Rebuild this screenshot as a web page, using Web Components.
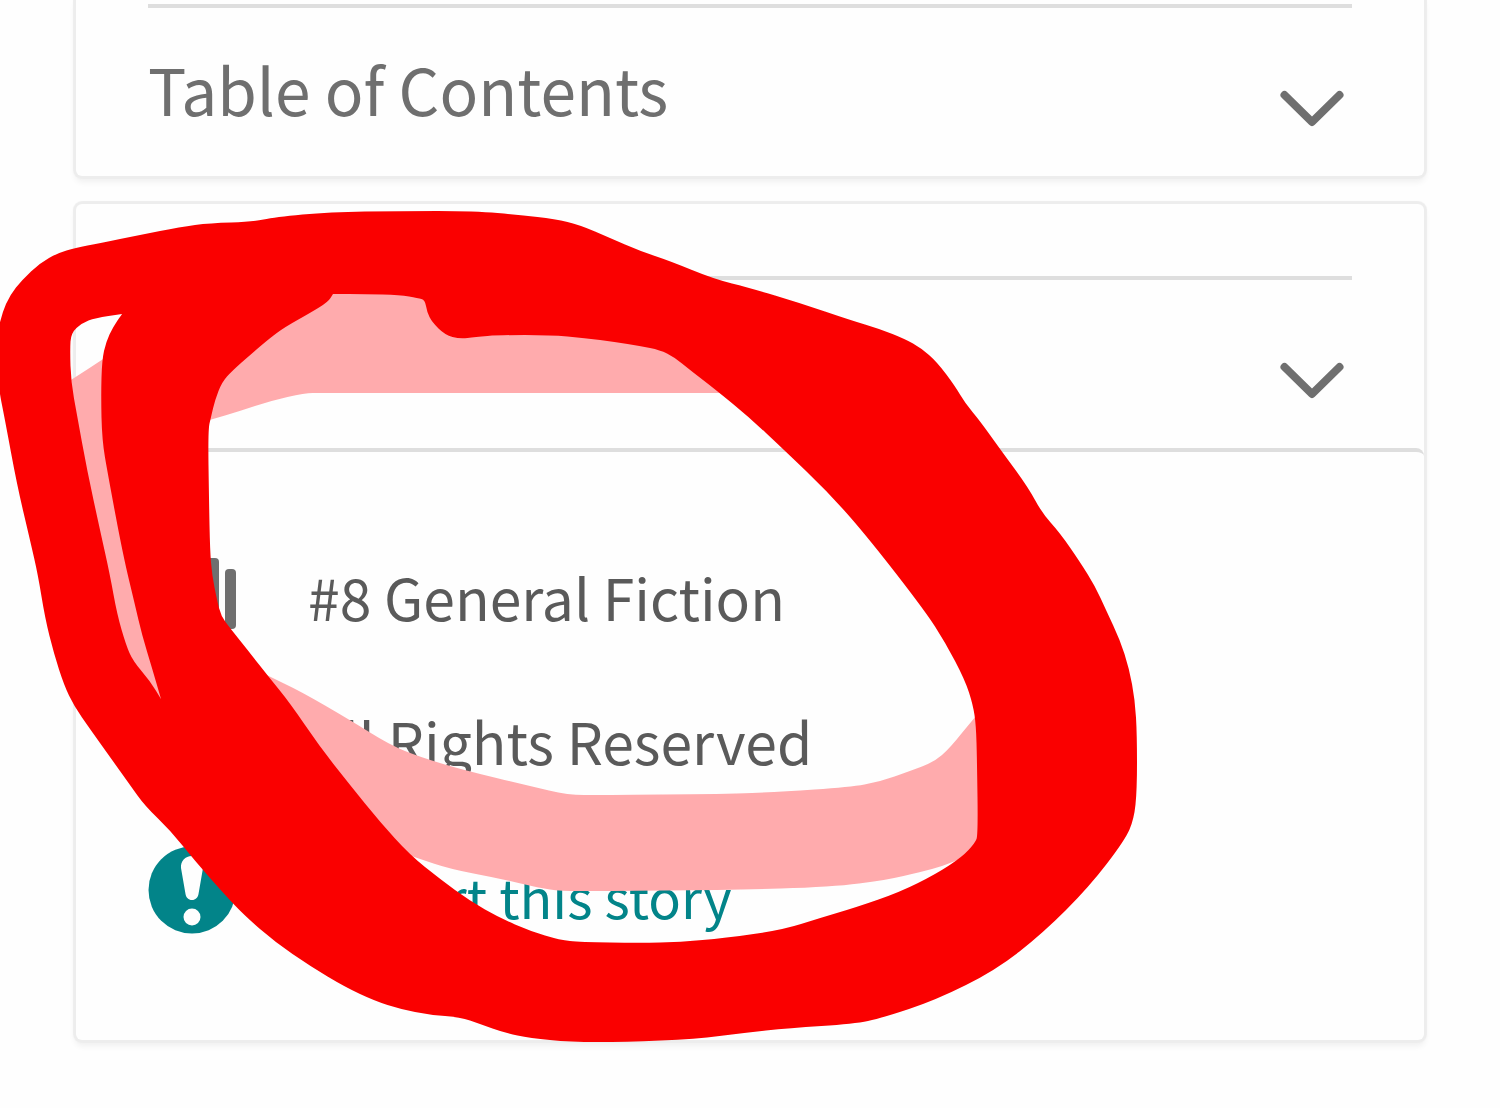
<!DOCTYPE html>
<html lang="en">
<head>
<meta charset="utf-8">
<meta name="viewport" content="width=device-width, initial-scale=1">
<title>Story details</title>
<style>
  body { margin: 0; background: #fefefe; }
</style>
</head>
<body>
<story-page>
  <story-card class="first">
    <card-header>Table of Contents</card-header>
  </story-card>
  <story-card class="second">
    <card-header label="Story details"></card-header>
    <detail-panel>
      <detail-row icon="books">#8 General Fiction</detail-row>
      <detail-row icon="rights">All Rights Reserved</detail-row>
      <detail-row icon="report" href="#report">Report this story</detail-row>
    </detail-panel>
  </story-card>
  <marker-ink slot="overlay"></marker-ink>
</story-page>

<script>
class BaseElement extends HTMLElement {
  render(html) {
    this.attachShadow({ mode: 'open' }).innerHTML = html;
  }
}

customElements.define('story-page', class extends BaseElement {
  connectedCallback() {
    this.render(`
      <style>
        :host { display: block; position: relative; overflow: hidden;
          font-family: "Noto Sans CJK SC", "Noto Sans", sans-serif; color: #6f6f6f; }
        main { display: flex; flex-direction: column; gap: 28px; padding: 0 76px 68px; }
      </style>
      <main><slot></slot></main>
      <slot name="overlay"></slot>`);
  }
});

customElements.define('story-card', class extends BaseElement {
  connectedCallback() {
    this.render(`
      <style>
        :host { display: block; background: #fefefe; border-radius: 6px; padding-top: 72px;
          box-shadow: 0 0 1px 3px #ededed, 0 5px 6px 1px rgba(0, 0, 0, .06); }
        :host(.first) { padding-top: 4px; border-radius: 0 0 6px 6px; }
        hr { margin: 0 72px; border: 0; height: 4px; background: #dedede; }
      </style>
      <hr><slot></slot>`);
  }
});

customElements.define('card-header', class extends BaseElement {
  connectedCallback() {
    const label = this.getAttribute('label');
    this.render(`
      <style>
        :host { display: block; }
        button { display: flex; align-items: flex-end; justify-content: space-between; box-sizing: border-box;
          width: 100%; min-height: 168px; padding: 40px 72px 48px; border: 0; background: none;
          color: inherit; font: inherit; font-size: 64px; line-height: 80px; text-align: left; cursor: pointer; }
        svg { display: block; flex: none; width: 80px; height: 40px; margin-left: auto; }
      </style>
      <button type="button"${label ? ` aria-label="${label}"` : ''}>
        <slot></slot>
        <svg viewBox="0 0 80 40" aria-hidden="true"><path d="M12.500 7 L40 34 L67.500 7" fill="none" stroke="#6f6f6f" stroke-width="8" stroke-linecap="round" stroke-linejoin="round"/></svg>
      </button>`);
  }
});

customElements.define('detail-panel', class extends BaseElement {
  connectedCallback() {
    this.render(`
      <style>
        :host { display: flex; flex-direction: column; border-top: 4px solid #dedede;
          border-radius: 8px; padding: 72px 72px 60px; }
      </style>
      <slot></slot>`);
  }
});

const ICONS = {
  books: `<svg viewBox="0 0 88 88" aria-hidden="true" fill="#6f6f6f">
    <rect x="20" y="6" width="14" height="72" rx="3"/><rect x="38" y="6" width="14" height="72" rx="3"/>
    <rect x="57" y="6" width="14" height="72" rx="4"/><rect x="77" y="17" width="11" height="60" rx="4"/></svg>`,
  rights: `<svg viewBox="0 0 88 88" aria-hidden="true" fill="none" stroke="#6f6f6f" stroke-width="7">
    <circle cx="46" cy="44" r="28"/><path d="M56 36a13 13 0 1 0 0 16"/></svg>`,
  report: `<svg class="tall" viewBox="0 0 88 100" aria-hidden="true">
    <circle cx="44" cy="44" r="43.500" fill="#028489"/>
    <path d="M44 10c-7 0-11.500 5-11 12l4.500 26c.6 3.500 3 6 6.500 6s5.900-2.500 6.500-6l4.500-26c.5-7-4-12-11-12z" fill="#fefefe"/>
    <circle cx="44" cy="71" r="8.500" fill="#fefefe"/></svg>`
};

customElements.define('detail-row', class extends BaseElement {
  connectedCallback() {
    const href = this.getAttribute('href');
    const inner = `${ICONS[this.getAttribute('icon')]}<span><slot></slot></span>`;
    this.render(`
      <style>
        :host { display: block; font-size: 57px; line-height: 80px; color: #5a5a5a; }
        :host([href]) { font-size: 54px; }
        .row { display: flex; align-items: center; gap: 72px; min-height: 144px;
          color: inherit; text-decoration: none; }
        a.row { color: #028489; min-height: 168px; gap: 80px; }
        svg { display: block; flex: none; width: 88px; height: 88px; }
        svg.tall { height: 100px; }
      </style>
      ${href ? `<a class="row" href="${href}">${inner}</a>` : `<div class="row">${inner}</div>`}`);
  }
});

/* Freehand marker shapes. A point given twice in a row stays a sharp corner. */
const OUTER = [[-4,340],[2,313],[10,295],[22,280],[40,263],[58,253],[75,248],[100,243],[140,235],[180,227],[210,223],[252,222],[275,217],[330,212],[400,211],[475,211],[520,215],[555,219],[580,225],[610,238],[640,251],[670,261],[714,279],[750,288],[800,303],[850,320],[880,329],[905,339],[921,348],[937,362],[955,386],[965,403],[980,421],[1000,449],[1028,487],[1042,513],[1060,533],[1080,562],[1095,586],[1106,610],[1120,640],[1129,668],[1135,700],[1137,735],[1137,790],[1134,819],[1125,840],[1089,887],[1043,933],[996,970],[936,1000],[882,1018],[854,1024],[789,1028],[743,1033],[696,1039],[625,1042],[570,1042],[530,1038],[505,1033],[480,1024],[460,1017],[430,1015],[400,1009],[375,1001],[345,987],[310,966],[275,942],[245,916],[225,895],[195,861],[170,830],[145,806],[130,785],[110,757],[90,729],[74,706],[64,685],[54,654],[45,618],[38,575],[30,540],[17,485],[5,420],[-2,385]];
const LOOP = [[333,294],[333,294],[365,294],[400,295],[418,298],[425,300],[427,312],[432,322],[445,335],[460,339],[475,337],[500,335],[550,335],[585,338],[615,342],[640,346],[660,350],[674,357],[690,370],[716,390],[750,418],[782,448],[830,494],[870,540],[925,611],[945,642],[965,680],[973,705],[976,725],[977,760],[978,835],[975,843],[962,857],[936,874],[900,892],[857,907],[820,918],[782,930],[725,938],[680,942],[640,943],[580,942],[560,940],[530,931],[500,918],[470,901],[440,879],[410,855],[380,822],[350,785],[320,747],[290,703],[268,676],[250,653],[230,628],[221,616],[217,600],[212,575],[210,550],[209,500],[208,430],[211,417],[215,400],[222,382],[232,371],[250,355],[270,338],[285,327],[310,313],[328,302]];
const SLIVER = [[122,314],[122,314],[113,327],[106,342],[102,360],[101,395],[102,440],[108,475],[123,555],[135,605],[142,635],[152,668],[161,699],[161,699],[150,681],[133,661],[126,645],[117,614],[110,575],[100,530],[87,470],[77,415],[71,382],[70,350],[71,333],[82,323],[95,318]];
const BAND_LEFT = [[60,387],[60,387],[74,378],[102,360],[130,340],[130,340],[190,720],[190,720],[100,690],[100,690]];
const BAND_TOP = [[180,428],[180,428],[210,420],[240,411],[270,401],[305,393],[320,393],[716,393],[760,393],[760,393],[700,300],[700,300],[300,260],[300,260],[180,340],[180,340]];
const BAND_BOTTOM = [[240,660],[240,660],[268,676],[300,691],[350,720],[390,745],[420,757],[463,770],[530,786],[568,795],[600,795],[725,794],[779,792],[850,787],[879,782],[910,771],[934,762],[950,748],[973,719],[1000,690],[1000,690],[1010,840],[1010,840],[965,857],[943,866],[921,872],[886,880],[832,887],[729,890],[600,891],[560,891],[540,888],[497,878],[450,869],[417,858],[380,845],[380,845],[260,740],[260,740]];

const same = (a, b) => a[0] === b[0] && a[1] === b[1];
const mid = (a, b) => [(a[0] + b[0]) / 2, (a[1] + b[1]) / 2];
function smooth(points) {
  const n = points.length;
  const start = mid(points[n - 1], points[0]);
  let d = `M${start}`;
  for (let i = 0; i < n; i++) {
    const next = points[(i + 1) % n];
    d += same(points[i], next) ? `L${next}` : `Q${points[i]} ${mid(points[i], next)}`;
  }
  return d + 'Z';
}

customElements.define('marker-ink', class extends BaseElement {
  connectedCallback() {
    this.render(`
      <style>
        :host { display: block; position: absolute; top: 0; left: 0; width: 100%; pointer-events: none; }
        svg { display: block; width: 100%; height: auto; }
      </style>
      <svg viewBox="0 0 1500 1108" aria-hidden="true">
        <g fill="#ffabad"><path d="${smooth(BAND_LEFT)}"/><path d="${smooth(BAND_TOP)}"/><path d="${smooth(BAND_BOTTOM)}"/></g>
        <path fill="#fa0000" fill-rule="evenodd" d="${smooth(OUTER)}${smooth(LOOP)}${smooth(SLIVER)}"/>
      </svg>`);
  }
});
</script>
</body>
</html>
